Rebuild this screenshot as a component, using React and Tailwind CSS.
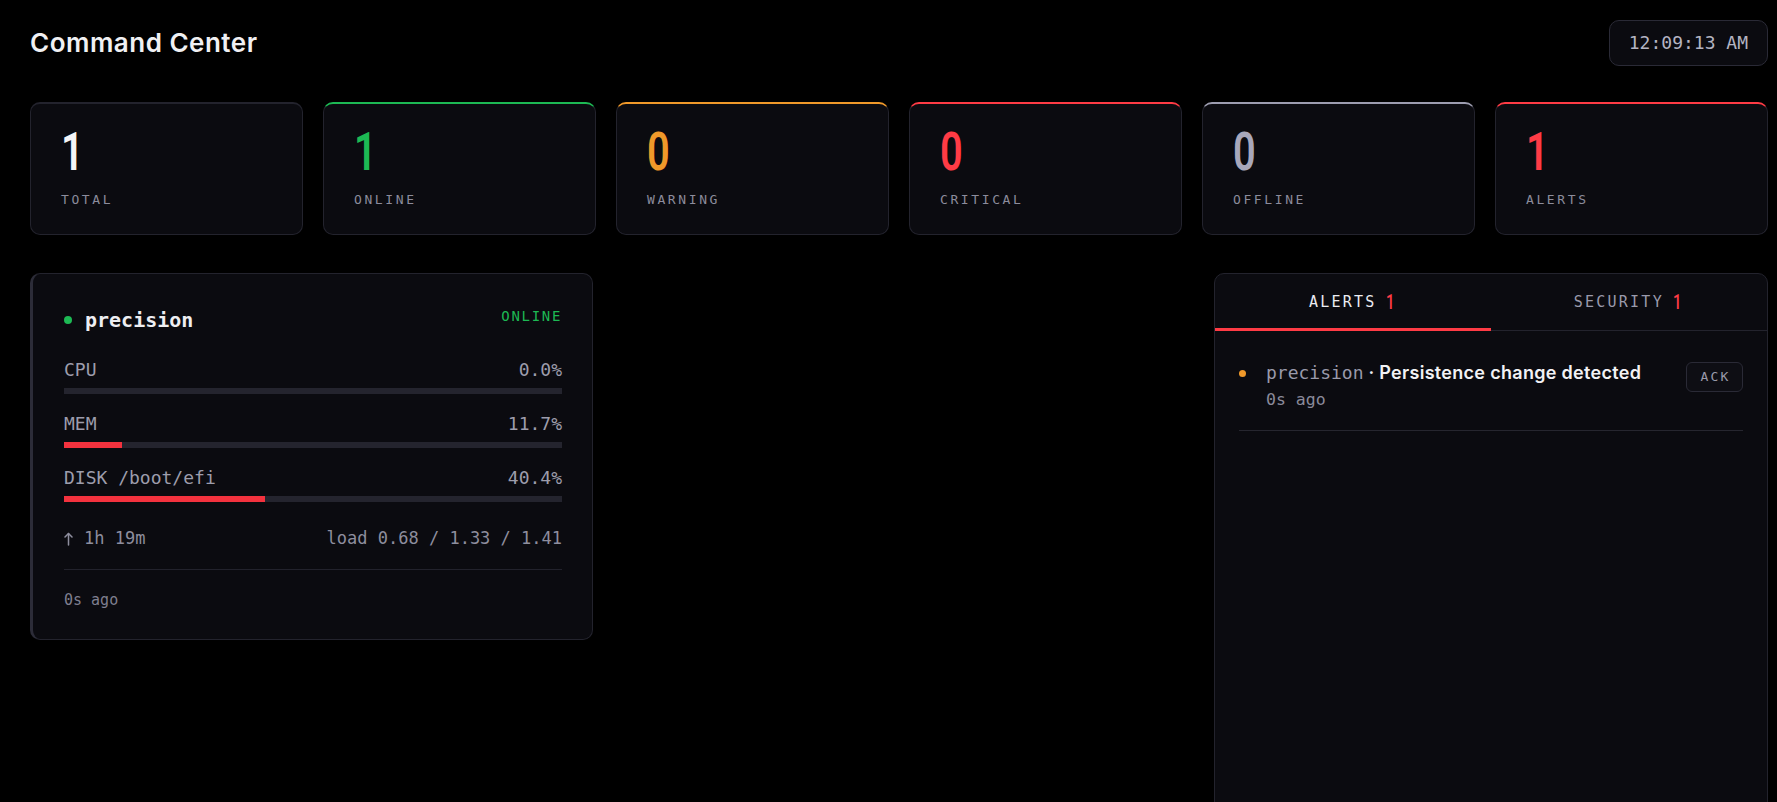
import React from "react";

const mono = "font-['DejaVu_Sans_Mono',monospace]";

function Stat({ value, label, numColor, topColor }) {
  return (
    <div
      className={`rounded-[10px] border border-[#23232d] border-t-2 ${topColor} bg-[#0b0b10] pl-[30px] pt-[22px] pb-[25px]`}
    >
      <div
        className={`h-[53px] text-[53px] leading-[53px] font-['Roboto',sans-serif] font-semibold ${numColor}`}
      >
        <span className="inline-block origin-left scale-x-75">{value}</span>
      </div>
      <div
        className={`mt-[12px] text-[13px] leading-[18px] tracking-[0.2em] text-[#8c8c9c] ${mono}`}
      >
        {label}
      </div>
    </div>
  );
}

function Metric({ label, value, pct }) {
  return (
    <div>
      <div className="flex justify-between text-[18px] leading-[26px] text-[#9d9dac]">
        <span>{label}</span>
        <span>{value}</span>
      </div>
      <div className="mt-[5px] h-[6px] bg-[#24242e]">
        <div className="h-full bg-[#f4323e]" style={{ width: `${pct}%` }} />
      </div>
    </div>
  );
}

export default function App() {
  return (
    <div className="h-screen w-full overflow-hidden bg-black pl-[30px] pr-[9px] pt-[20px] font-['Inter',sans-serif]">
      {/* Header */}
      <div className="flex h-[46px] items-center justify-between">
        <h1 className="text-[26px] leading-[36px] font-semibold tracking-[0.5px] text-[#f0f0f3]">
          Command Center
        </h1>
        <div
          className={`rounded-[10px] border border-[#2a2a36] bg-[#0b0b10] px-[19px] py-[9px] text-[18px] leading-[26px] text-[#b4b4c2] ${mono}`}
        >
          12:09:13 AM
        </div>
      </div>

      {/* Stats */}
      <div className="mt-[36px] grid grid-cols-6 gap-[20px]">
        <Stat value="1" label="TOTAL" numColor="text-[#f5f5f7]" topColor="border-t-[#23232d]" />
        <Stat value="1" label="ONLINE" numColor="text-[#1db954]" topColor="border-t-[#1db954]" />
        <Stat value="0" label="WARNING" numColor="text-[#f0992a]" topColor="border-t-[#f0992a]" />
        <Stat value="0" label="CRITICAL" numColor="text-[#ff3b45]" topColor="border-t-[#ff3b45]" />
        <Stat value="0" label="OFFLINE" numColor="text-[#a8a8bb]" topColor="border-t-[#9d9db0]" />
        <Stat value="1" label="ALERTS" numColor="text-[#ff3b45]" topColor="border-t-[#ff3b45]" />
      </div>

      {/* Lower section */}
      <div className="mt-[38px] flex items-start justify-between">
        {/* Host card */}
        <div
          className={`w-[563px] rounded-[10px] border border-[#23232d] border-l-[3px] border-l-[#2c2c38] bg-[#0b0b10] pl-[31px] pr-[30px] pt-[32px] pb-[28px] ${mono}`}
        >
          <div className="flex items-start justify-between">
            <div className="flex h-[28px] items-center gap-[13px]">
              <span className="h-[8px] w-[8px] rounded-full bg-[#1db954]" />
              <span className="text-[20px] leading-[28px] font-bold text-[#eeeef2]">
                precision
              </span>
            </div>
            <span className="text-[14px] leading-[20px] tracking-[0.12em] text-[#1db954]">
              ONLINE
            </span>
          </div>

          <div className="mt-[23px] flex flex-col gap-[17px]">
            <Metric label="CPU" value="0.0%" pct={0} />
            <Metric label="MEM" value="11.7%" pct={11.7} />
            <Metric label="DISK /boot/efi" value="40.4%" pct={40.4} />
          </div>

          <div className="mt-[24px] flex justify-between text-[17px] leading-[25px] text-[#8e8e9e]">
            <span className="flex items-center">
              <svg width="9" height="14" viewBox="0 0 9 14" fill="none" stroke="#8e8e9e" strokeWidth="1.5" strokeLinecap="round" strokeLinejoin="round" className="mr-[11px]">
                <path d="M4.5 13V1.5" />
                <path d="M1 5L4.5 1.5L8 5" />
              </svg>
              1h 19m
            </span>
            <span>load 0.68 / 1.33 / 1.41</span>
          </div>

          <div className="mt-[18px] h-px bg-[#22222c]" />

          <div className="mt-[19px] text-[15px] leading-[22px] text-[#7f7f8f]">0s ago</div>
        </div>

        {/* Alerts panel */}
        <div className="flex h-[600px] w-[554px] flex-col rounded-[10px] border border-[#23232d] bg-[#0b0b10]">
          <div className="flex border-b border-[#23232d]">
            <div className="relative flex h-[56px] flex-1 items-center justify-center">
              <span className={`text-[15px] leading-[22px] tracking-[0.15em] text-[#ececf2] ${mono}`}>
                ALERTS
              </span>
              <span className="ml-[9px] inline-block origin-left scale-x-75 font-['Roboto',sans-serif] text-[20px] leading-[22px] font-medium text-[#ff3b45]">
                1
              </span>
              <div className="absolute right-0 bottom-[-1px] left-0 h-[3px] bg-[#ff3b45]" />
            </div>
            <div className="flex h-[56px] flex-1 items-center justify-center">
              <span className={`text-[15px] leading-[22px] tracking-[0.15em] text-[#9a9aab] ${mono}`}>
                SECURITY
              </span>
              <span className="ml-[9px] inline-block origin-left scale-x-75 font-['Roboto',sans-serif] text-[20px] leading-[22px] font-medium text-[#ff3b45]">
                1
              </span>
            </div>
          </div>

          <div className="px-[24px]">
            <div className="flex items-start justify-between border-b border-[#26262f] pt-[29px] pb-[18px]">
              <div className="flex items-start gap-[20px]">
                <div className="flex h-[26px] items-center">
                  <span className="h-[7px] w-[7px] rounded-full bg-[#f0992a]" />
                </div>
                <div>
                  <div className="text-[18px] leading-[26px] whitespace-nowrap">
                    <span className={`text-[#9a9aab] ${mono}`}>precision</span>
                    <span className="mx-[5px] font-semibold text-[#e8e8ee]">·</span>
                    <span className="font-semibold tracking-[0.3px] text-[#f2f2f5]">
                      Persistence change detected
                    </span>
                  </div>
                  <div className={`mt-[2px] text-[16.5px] leading-[24px] text-[#8a8a9a] ${mono}`}>
                    0s ago
                  </div>
                </div>
              </div>
              <div
                className={`mt-[2px] flex h-[30px] w-[57px] items-center justify-center rounded-[6px] border border-[#2a2a36] bg-[#0e0e14] pl-[2px] text-[13px] tracking-[0.17em] text-[#9a9aab] ${mono}`}
              >
                ACK
              </div>
            </div>
          </div>
        </div>
      </div>
    </div>
  );
}
